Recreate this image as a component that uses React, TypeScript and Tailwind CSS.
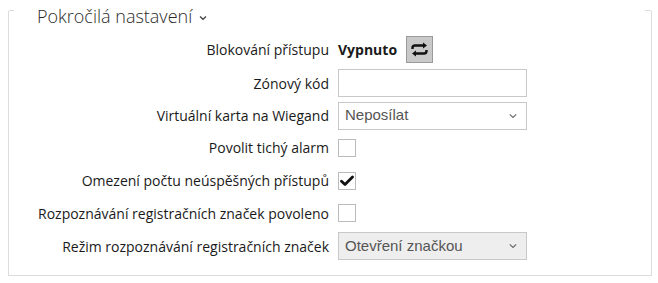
import React from "react";

const labelFont = { fontFamily: '"Open Sans", "Noto Sans", sans-serif' };
const inputFont = { fontFamily: '"Liberation Sans", Arial, sans-serif' };

function Chevron() {
  return (
    <svg width="8" height="5" viewBox="0 0 8 5" className="absolute right-[9px] top-1/2 -translate-y-1/2">
      <path d="M0.8 0.8 L4 3.9 L7.2 0.8" fill="none" stroke="#666" strokeWidth="1.1" />
    </svg>
  );
}

function Row({ label, h, children }: { label: string; h: string; children: React.ReactNode }) {
  return (
    <div className={`flex items-center ${h}`}>
      <div className="w-[329px] text-right text-[14px] text-[#1a1a1a] whitespace-nowrap" style={labelFont}>
        {label}
      </div>
      <div className="ml-[9px] flex items-center">{children}</div>
    </div>
  );
}

function Checkbox({ checked }: { checked?: boolean }) {
  return (
    <div className="w-[18px] h-[18px] border border-[#bbb] bg-white relative">
      {checked && (
        <svg width="14" height="12" viewBox="0 0 14 12" className="absolute left-[1px] top-[2px]">
          <path d="M1.5 6.2 L5 9.5 L12.5 2" fill="none" stroke="#111" strokeWidth="2.8" strokeLinecap="round" strokeLinejoin="round" />
        </svg>
      )}
    </div>
  );
}

export default function App() {
  return (
    <div className="w-[658px] h-[283px] bg-white relative" style={labelFont}>
      <div className="absolute left-[8px] top-[11px] w-[644px] h-[265px] border-l border-r border-b border-[#dcdcdc]">
        <div className="absolute left-0 top-[-1px] w-[5px] border-t border-[#dcdcdc]" />
        <div className="absolute right-0 top-[-1px] w-[6px] border-t border-[#dcdcdc]" />
      </div>
      <div className="relative pt-[1px]">
        <div className="flex items-center pl-[37px] h-[30px]">
          <span className="text-[18px] font-light text-[#2a2a2a] leading-none">Pokročilá nastavení</span>
          <svg width="8" height="6" viewBox="0 0 8 6" className="ml-[7px] mt-[3px]">
            <path d="M1 1.5 L4 4.3 L7 1.5" fill="none" stroke="#444" strokeWidth="1.3" />
          </svg>
        </div>
        <div className="pt-[2px]">
          <Row label="Blokování přístupu" h="h-[33px]">
            <span className="text-[14px] font-bold text-[#1a1a1a]">Vypnuto</span>
            <button className="ml-[9px] w-[27px] h-[27px] bg-[#c9c9c9] border border-[#9a9a9a] flex items-center justify-center">
              <svg width="19" height="15" viewBox="0 0 19 15">
                <path d="M2.5 7 V6 Q2.5 3.5 5 3.5 H14" fill="none" stroke="#111" strokeWidth="2.4" />
                <path d="M13 0.5 L17 3.5 L13 6.5 Z" fill="#111" />
                <path d="M16.5 8 V9 Q16.5 11.5 14 11.5 H5" fill="none" stroke="#111" strokeWidth="2.4" />
                <path d="M6 8.5 L2 11.5 L6 14.5 Z" fill="#111" />
              </svg>
            </button>
          </Row>
          <Row label="Zónový kód" h="h-[34px]">
            <div className="w-[189px] h-[28px] border border-[#c8c8c8] bg-white" />
          </Row>
          <Row label="Virtuální karta na Wiegand" h="h-[31px]">
            <div className="relative w-[189px] h-[28px] border border-[#c8c8c8] bg-white flex items-center pl-[6px] text-[15px] text-[#555]" style={inputFont}>
              Neposílat
              <Chevron />
            </div>
          </Row>
          <Row label="Povolit tichý alarm" h="h-[33px]">
            <Checkbox />
          </Row>
          <Row label="Omezení počtu neúspěšných přístupů" h="h-[33px]">
            <Checkbox checked />
          </Row>
          <Row label="Rozpoznávání registračních značek povoleno" h="h-[32px]">
            <Checkbox />
          </Row>
          <Row label="Režim rozpoznávání registračních značek" h="h-[34px]">
            <div className="relative w-[189px] h-[28px] border border-[#c8c8c8] bg-[#eeeeee] flex items-center pl-[6px] text-[15px] text-[#555]" style={inputFont}>
              Otevření značkou
              <Chevron />
            </div>
          </Row>
        </div>
      </div>
    </div>
  );
}
